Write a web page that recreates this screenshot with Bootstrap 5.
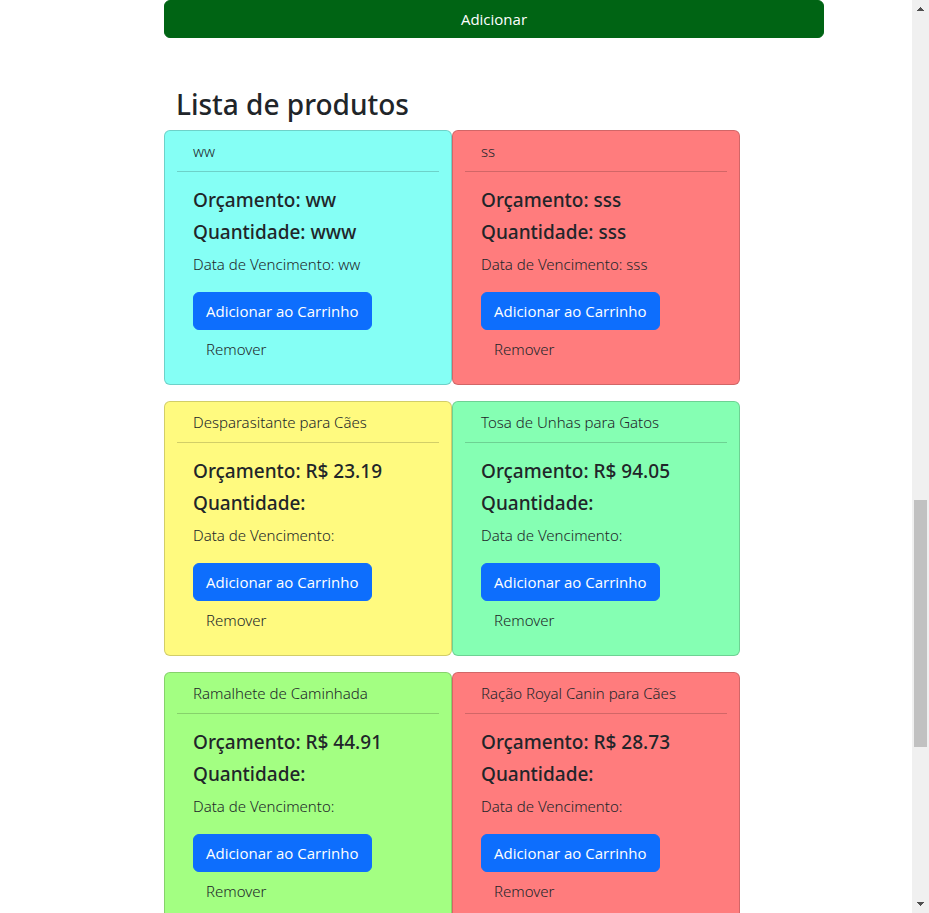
<!DOCTYPE html>
<html lang="pt-BR">
<head>
<meta charset="utf-8">
<meta name="viewport" content="width=device-width, initial-scale=1">
<title>Lista de produtos</title>
<link href="https://cdn.jsdelivr.net/npm/bootstrap@5.3.0/dist/css/bootstrap.min.css" rel="stylesheet">
<style>
  body { font-family: "Segoe UI", "Open Sans", "Noto Sans", sans-serif; font-size: 15px; line-height: 24px; color: #212529; background: #fff; }
  .btn { font-size: 15px; line-height: 24px; }
  .btn-add { --bs-btn-color: #fff; --bs-btn-bg: #006414; --bs-btn-border-color: #006414; --bs-btn-hover-color: #fff; --bs-btn-hover-bg: #00500f; }
  .list-title { font-family: "Segoe UI", "Noto Sans", sans-serif; font-size: 28px; line-height: 36px; font-weight: 500; }
  .product { width: 288px; font-family: "Segoe UI", "Noto Sans", sans-serif; font-weight: 350; --bs-card-cap-bg: transparent; --bs-card-border-color: rgba(0, 0, 0, .175); }
  .product .card-title { font-size: 19px; line-height: 24px; font-weight: 500; }
  .btn-primary { font-family: "Segoe UI", "Open Sans", sans-serif; }
  .btn-remove { font-family: "Segoe UI", "Noto Sans", sans-serif; font-weight: 350; }
  .tone-cyan { --bs-card-bg: #85fff5; }
  .tone-red { --bs-card-bg: #ff7c7d; }
  .tone-yellow { --bs-card-bg: #fffa7f; }
  .tone-mint { --bs-card-bg: #85ffb3; }
  .tone-lime { --bs-card-bg: #a3ff82; }
  .scroll-track { width: 17px; background: #f0f0f0; }
  .scroll-before { flex: 483 0 0; }
  .scroll-thumb { flex: 247 0 0; width: 13px; background: #c1c1c1; }
  .scroll-after { flex: 149 0 0; }
</style>
</head>
<body class="d-flex vh-100 overflow-hidden">
<main class="flex-grow-1 overflow-hidden">
  <div class="row g-0">
    <div class="col-9 offset-2">
      <div class="px-1 mx-2">
        <button type="button" class="btn btn-add w-100">Adicionar</button>
        <h2 class="list-title mt-5 mb-2 ms-2 ps-1">Lista de produtos</h2>
        <div class="d-flex flex-wrap">
          <article class="card product tone-cyan px-2 mb-3">
            <div class="mx-1">
              <div class="card-header">ww</div>
              <div class="card-body">
                <h5 class="card-title">Orçamento: ww</h5>
                <h5 class="card-title">Quantidade: www</h5>
                <p class="card-text mb-3">Data de Vencimento: ww</p>
                <button type="button" class="btn btn-primary">Adicionar ao Carrinho</button>
                <button type="button" class="btn btn-remove d-block">Remover</button>
              </div>
            </div>
          </article>
          <article class="card product tone-red px-2 mb-3">
            <div class="mx-1">
              <div class="card-header">ss</div>
              <div class="card-body">
                <h5 class="card-title">Orçamento: sss</h5>
                <h5 class="card-title">Quantidade: sss</h5>
                <p class="card-text mb-3">Data de Vencimento: sss</p>
                <button type="button" class="btn btn-primary">Adicionar ao Carrinho</button>
                <button type="button" class="btn btn-remove d-block">Remover</button>
              </div>
            </div>
          </article>
          <article class="card product tone-yellow px-2 mb-3">
            <div class="mx-1">
              <div class="card-header">Desparasitante para Cães</div>
              <div class="card-body">
                <h5 class="card-title">Orçamento: R$ 23.19</h5>
                <h5 class="card-title">Quantidade:</h5>
                <p class="card-text mb-3">Data de Vencimento:</p>
                <button type="button" class="btn btn-primary">Adicionar ao Carrinho</button>
                <button type="button" class="btn btn-remove d-block">Remover</button>
              </div>
            </div>
          </article>
          <article class="card product tone-mint px-2 mb-3">
            <div class="mx-1">
              <div class="card-header">Tosa de Unhas para Gatos</div>
              <div class="card-body">
                <h5 class="card-title">Orçamento: R$ 94.05</h5>
                <h5 class="card-title">Quantidade:</h5>
                <p class="card-text mb-3">Data de Vencimento:</p>
                <button type="button" class="btn btn-primary">Adicionar ao Carrinho</button>
                <button type="button" class="btn btn-remove d-block">Remover</button>
              </div>
            </div>
          </article>
          <article class="card product tone-lime px-2 mb-3">
            <div class="mx-1">
              <div class="card-header">Ramalhete de Caminhada</div>
              <div class="card-body">
                <h5 class="card-title">Orçamento: R$ 44.91</h5>
                <h5 class="card-title">Quantidade:</h5>
                <p class="card-text mb-3">Data de Vencimento:</p>
                <button type="button" class="btn btn-primary">Adicionar ao Carrinho</button>
                <button type="button" class="btn btn-remove d-block">Remover</button>
              </div>
            </div>
          </article>
          <article class="card product tone-red px-2 mb-3">
            <div class="mx-1">
              <div class="card-header">Ração Royal Canin para Cães</div>
              <div class="card-body">
                <h5 class="card-title">Orçamento: R$ 28.73</h5>
                <h5 class="card-title">Quantidade:</h5>
                <p class="card-text mb-3">Data de Vencimento:</p>
                <button type="button" class="btn btn-primary">Adicionar ao Carrinho</button>
                <button type="button" class="btn btn-remove d-block">Remover</button>
              </div>
            </div>
          </article>
        </div>
      </div>
    </div>
  </div>
</main>
<aside class="scroll-track d-flex flex-column align-items-center flex-shrink-0" aria-hidden="true">
  <svg class="flex-shrink-0" width="17" height="17" shape-rendering="crispEdges" fill="#505050"><path d="M8 7h1v1h1v1h1v1h1v1H5v-1h1V9h1V8h1z"/></svg>
  <div class="scroll-before"></div>
  <div class="scroll-thumb"></div>
  <div class="scroll-after"></div>
  <svg class="flex-shrink-0" width="17" height="17" shape-rendering="crispEdges" fill="#505050"><path d="M5 6h7v1h-1v1h-1v1H9v1H8V9H7V8H6V7H5z"/></svg>
</aside>
<script src="https://cdn.jsdelivr.net/npm/bootstrap@5.3.0/dist/js/bootstrap.bundle.min.js"></script>
</body>
</html>
